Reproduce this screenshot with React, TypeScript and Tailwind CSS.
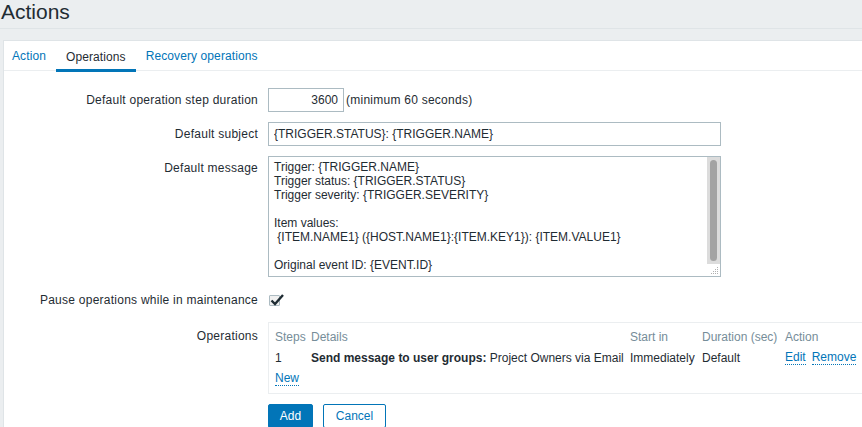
import React from "react";

const messageLines = [
  "Trigger: {TRIGGER.NAME}",
  "Trigger status: {TRIGGER.STATUS}",
  "Trigger severity: {TRIGGER.SEVERITY}",
  "",
  "Item values:",
  " {ITEM.NAME1} ({HOST.NAME1}:{ITEM.KEY1}): {ITEM.VALUE1}",
  "",
  "Original event ID: {EVENT.ID}",
];

function Label({ children }: { children: React.ReactNode }) {
  return (
    <div className="w-[254px] shrink-0 text-right text-[#1f2c33] tracking-[0.25px]">
      {children}
    </div>
  );
}

function DottedLink({ children }: { children: React.ReactNode }) {
  return (
    <a className="text-[#0275b8] border-b border-dotted border-[#0275b8] leading-[13px] inline-block cursor-pointer">
      {children}
    </a>
  );
}

export default function App() {
  return (
    <div
      className="w-[862px] h-[427px] overflow-hidden bg-[#ebeef0] text-[12px] text-[#1f2c33]"
      style={{ fontFamily: '"Liberation Sans", Arial, sans-serif' }}
    >
      <div className="h-[29px] border-b border-[#dfe4e7] pl-[1px]">
        <h1 className="text-[21px] leading-[24px] text-[#1f2c33]">Actions</h1>
      </div>
      <div className="mt-[11px] ml-[3px] w-[870px] bg-white border border-[#dfe4e7] h-[400px]">
        {/* tabs */}
        <div className="flex h-[30px] border-b border-[#ebeef0] tracking-[0.1px]">
          <div className="px-[8px] flex items-center text-[#0275b8]">Action</div>
          <div className="ml-[2px] px-[10px] flex items-center border-b-[3px] border-[#0275b8] pt-[3px] mb-[-2px] text-[#1f2c33]">
            Operations
          </div>
          <div className="px-[10px] flex items-center text-[#0275b8]">
            Recovery operations
          </div>
        </div>

        <div className="pt-[17px] flex flex-col">
          {/* step duration */}
          <div className="flex items-center h-[24px]">
            <Label>Default operation step duration</Label>
            <input
              readOnly
              value="3600"
              className="ml-[10px] w-[76px] h-[24px] border border-[#acbbc2] px-[5px] text-right outline-none text-[#1f2c33]"
            />
            <span className="ml-[2px] tracking-[0.25px]">(minimum 60 seconds)</span>
          </div>

          {/* subject */}
          <div className="flex items-center h-[24px] mt-[10px]">
            <Label>Default subject</Label>
            <input
              readOnly
              value="{TRIGGER.STATUS}: {TRIGGER.NAME}"
              className="ml-[10px] w-[453px] h-[24px] border border-[#acbbc2] px-[5px] outline-none text-[#1f2c33]"
            />
          </div>

          {/* message */}
          <div className="flex mt-[10px]">
            <div className="pt-[3px]">
              <Label>Default message</Label>
            </div>
            <div className="ml-[10px] w-[453px] h-[121px] border border-[#acbbc2] flex">
              <div className="flex-1 px-[5px] pt-[3px] leading-[14px] whitespace-pre">
                {messageLines.map((l, i) => (
                  <div key={i} className="h-[14px]">
                    {l}
                  </div>
                ))}
              </div>
              <div className="w-[13px] flex flex-col">
                <div className="h-[107px] bg-[#dcdcdc] px-[2px] py-[3px]">
                  <div className="h-full w-[7px] mx-auto rounded-full bg-[#a3a3a3]" />
                </div>
                <div className="flex-1 relative">
                  <svg width="13" height="12" className="absolute bottom-0 right-0">
                    <g fill="#b0b0b0">
                      <rect x="10" y="3" width="1" height="1" />
                      <rect x="8" y="5" width="1" height="1" />
                      <rect x="10" y="5" width="1" height="1" />
                      <rect x="6" y="7" width="1" height="1" />
                      <rect x="8" y="7" width="1" height="1" />
                      <rect x="10" y="7" width="1" height="1" />
                      <rect x="4" y="9" width="1" height="1" />
                      <rect x="6" y="9" width="1" height="1" />
                      <rect x="8" y="9" width="1" height="1" />
                      <rect x="10" y="9" width="1" height="1" />
                    </g>
                  </svg>
                </div>
              </div>
            </div>
          </div>

          {/* pause */}
          <div className="flex items-center h-[20px] mt-[13px]">
            <Label>Pause operations while in maintenance</Label>
            <div className="ml-[10px] relative w-[16px] h-[14px]">
              <div className="absolute left-[1px] top-[2px] w-[11px] h-[11px] border border-[#acbbc2] bg-[#f0f0f0] rounded-[1px]" />
              <svg width="16" height="14" viewBox="0 0 16 14" className="absolute left-[1px] top-[0px]">
                <path d="M2.5 7.5 L6 11 L14 2" fill="none" stroke="#1f2c33" strokeWidth="2.4" />
              </svg>
            </div>
          </div>

          {/* operations */}
          <div className="flex mt-[12px]">
            <div className="pt-[5px]">
              <Label>Operations</Label>
            </div>
            <div className="ml-[10px] w-[600px] h-[72px] border border-[#ebeef0] px-[6px] pt-[4px]">
              <div className="flex h-[20px] items-center text-[#768d99]">
                <div className="w-[36px]">Steps</div>
                <div className="w-[319px]">Details</div>
                <div className="w-[72px]">Start in</div>
                <div className="w-[83px]">Duration (sec)</div>
                <div>Action</div>
              </div>
              <div className="flex h-[22px] items-center">
                <div className="w-[36px]">1</div>
                <div className="w-[319px] whitespace-nowrap">
                  <b>Send message to user groups:</b> Project Owners via Email
                </div>
                <div className="w-[72px]">Immediately</div>
                <div className="w-[83px]">Default</div>
                <div className="flex gap-[6px]">
                  <DottedLink>Edit</DottedLink>
                  <DottedLink>Remove</DottedLink>
                </div>
              </div>
              <div className="h-[20px] flex items-center">
                <DottedLink>New</DottedLink>
              </div>
            </div>
          </div>

          {/* buttons */}
          <div className="flex mt-[10px] ml-[264px] gap-[10px]">
            <button className="h-[24px] w-[45px] bg-[#0275b8] text-white rounded-[2px] border border-[#0275b8]">
              Add
            </button>
            <button className="h-[24px] w-[63px] bg-white text-[#0275b8] rounded-[2px] border border-[#0275b8]">
              Cancel
            </button>
          </div>
        </div>
      </div>
    </div>
  );
}
